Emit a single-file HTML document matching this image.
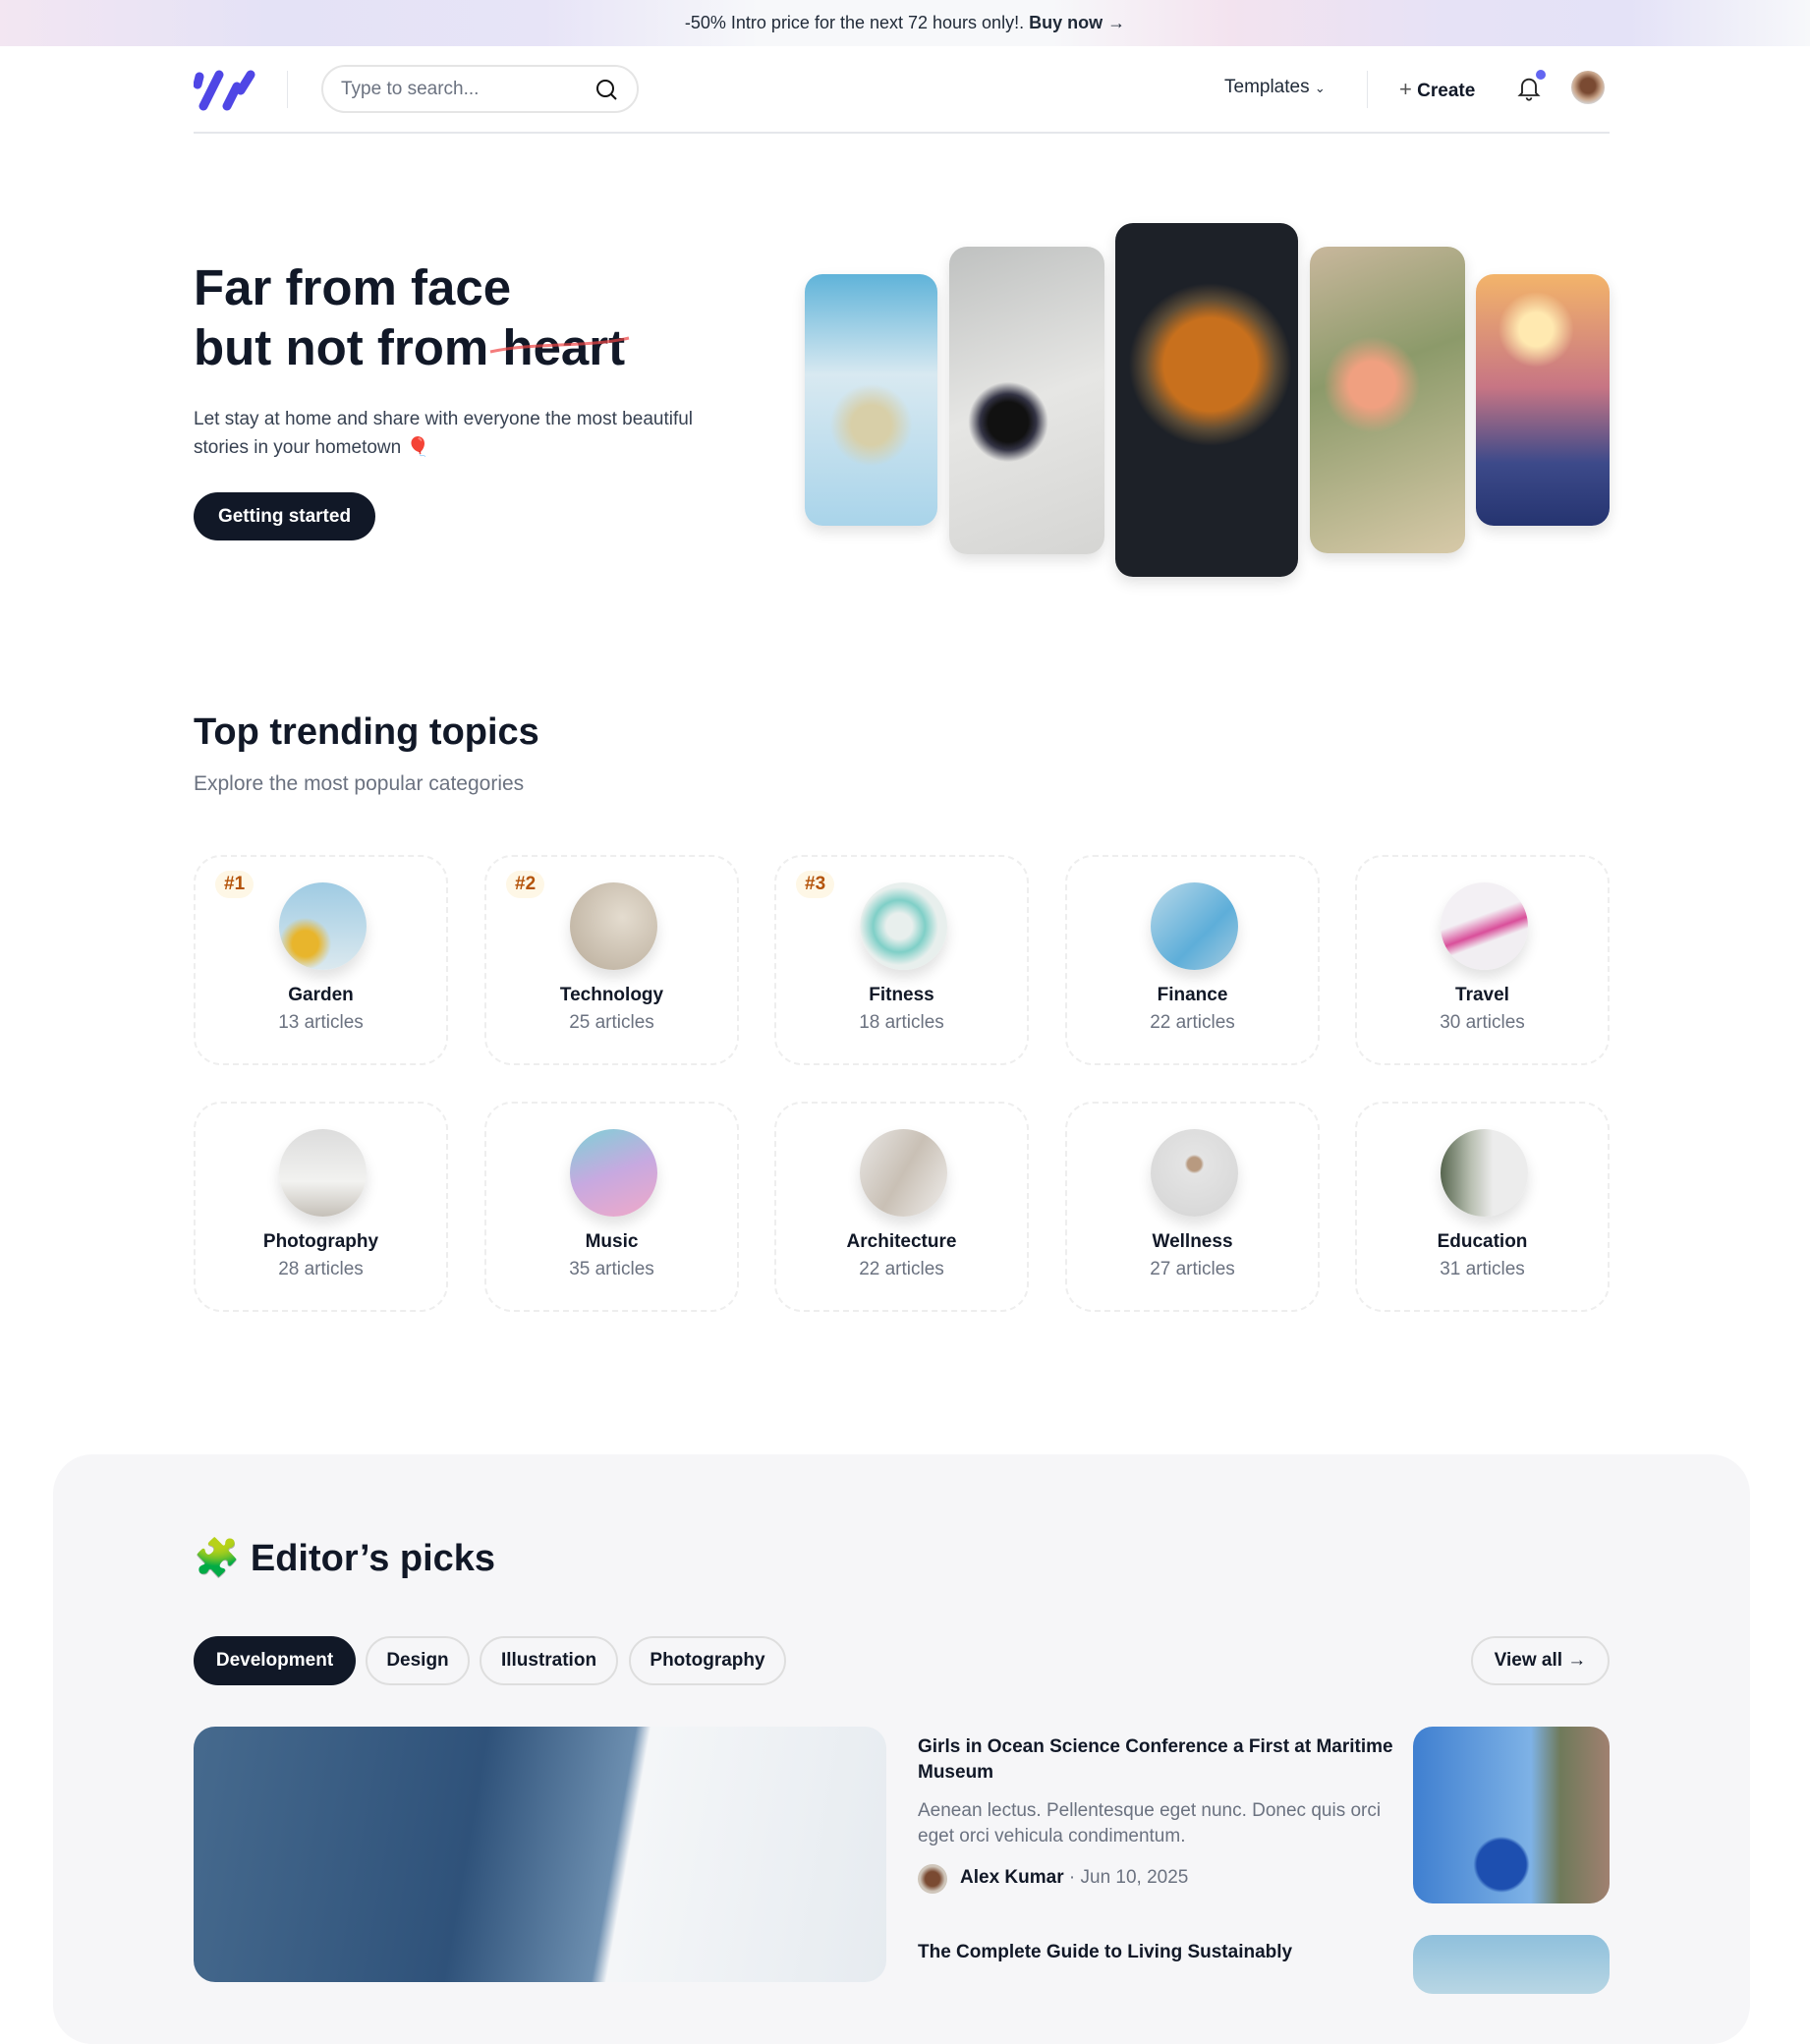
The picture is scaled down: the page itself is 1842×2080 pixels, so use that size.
<!DOCTYPE html>
<html><head><meta charset="utf-8"><style>
*{box-sizing:border-box;margin:0;padding:0}
body{width:1842px;height:1998px;overflow:hidden;background:#fff;font-family:"Liberation Sans",sans-serif;color:#111827;position:relative}
.a{position:absolute}
.banner{left:0;top:0;width:1842px;height:47px;background:linear-gradient(90deg,#f3e6f2 0%,#e4e2f6 15%,#e7e4f7 30%,#f7f8fa 42%,#f7f8fa 58%,#f3e3ef 68%,#e6e2f6 80%,#e4e2f7 90%,#f7f8fa 100%);text-align:center;line-height:47px;font-size:18px;color:#1f2937}
.card{width:259px;height:214px;border:2px dashed #eeeeee;border-radius:28px;text-align:center}
.circ{position:absolute;left:85px;top:26px;width:89px;height:89px;border-radius:50%;box-shadow:0 8px 14px rgba(0,0,0,.12)}
.nm{position:absolute;left:0;right:0;top:130px;font-size:19px;font-weight:bold}
.ct{position:absolute;left:0;right:0;top:158px;font-size:19px;color:#6b7280}
.rk{position:absolute;left:20px;top:14px;height:28px;padding:0 9px;border-radius:14px;background:#fef7e6;color:#b45309;font-weight:bold;font-size:19px;line-height:28px}
.tab{top:1665px;height:50px;border:2px solid #dedede;border-radius:25px;font-size:19px;line-height:46px;text-align:center;font-weight:bold;color:#111827}
.ph{border-radius:18px;box-shadow:0 6px 14px rgba(0,0,0,.12)}
</style></head><body>
<div class="a banner">-50% Intro price for the next 72 hours only!. <b>Buy now</b> →</div>

<svg class="a" style="left:197px;top:70px" width="64" height="44" viewBox="0 0 64 44"><g stroke="#4f46e5" stroke-width="9" stroke-linecap="round"><line x1="6" y1="8" x2="4" y2="16"/><line x1="26" y1="6" x2="10" y2="38"/><line x1="44" y1="18" x2="34" y2="38"/><line x1="58" y1="6" x2="48" y2="22"/></g></svg>
<div class="a" style="left:292px;top:72px;width:1px;height:38px;background:#e5e7eb"></div>
<div class="a" style="left:327px;top:66px;width:323px;height:49px;border:2px solid #e5e5e5;border-radius:25px;font-size:19px;color:#6b7280;line-height:45px;padding-left:18px">Type to search...</div>
<svg class="a" style="left:605px;top:79px" width="24" height="24" viewBox="0 0 24 24" fill="none" stroke="#111" stroke-width="2"><circle cx="11" cy="11" r="8"/><path d="M17 17l5 5"/></svg>
<div class="a" style="left:1246px;top:78px;font-size:19px;color:#1f2937">Templates <span style="font-size:13px">⌄</span></div>
<div class="a" style="left:1391px;top:72px;width:1px;height:38px;background:#e5e7eb"></div>
<div class="a" style="left:1424px;top:78px;font-size:19px;font-weight:bold"><span style="font-weight:normal;color:#555;font-size:22px">+</span> Create</div>
<svg class="a" style="left:1542px;top:76px" width="28" height="28" viewBox="0 0 24 24" fill="none" stroke="#222" stroke-width="1.6"><path d="M6 16V10a6 6 0 0112 0v6l2 2H4z"/><path d="M10 20a2 2 0 004 0"/></svg>
<div class="a" style="left:1563px;top:71px;width:10px;height:10px;border-radius:50%;background:#6366f1"></div>
<div class="a" style="left:1599px;top:72px;width:34px;height:34px;border-radius:50%;background:radial-gradient(circle at 50% 45%,#7a4a32 30%,#c9a58a 55%,#d7d9dc 75%)"></div>
<div class="a" style="left:197px;top:134px;width:1441px;height:2px;background:#e5e7eb"></div>

<div class="a" style="left:197px;top:262px;font-size:51px;font-weight:bold;line-height:61px;color:#111827">Far from face<br>but not from heart</div>
<svg class="a" style="left:495px;top:336px" width="150" height="30"><path d="M4 22 C50 12 100 18 145 8" stroke="#ef4444" stroke-width="3" fill="none" opacity=".7"/></svg>
<div class="a" style="left:197px;top:412px;font-size:19px;line-height:29px;color:#374151">Let stay at home and share with everyone the most beautiful<br>stories in your hometown 🎈</div>
<div class="a" style="left:197px;top:501px;width:185px;height:49px;border-radius:25px;background:#111827;color:#fff;font-weight:bold;font-size:19px;line-height:49px;text-align:center">Getting started</div>

<div class="a ph" style="left:819px;top:279px;width:135px;height:256px;background:radial-gradient(circle at 50% 60%,#d8cfa8 12%,transparent 25%),linear-gradient(180deg,#5fb3d9,#d8e9f1 40%,#a9d4ea)"></div>
<div class="a ph" style="left:966px;top:251px;width:158px;height:313px;background:radial-gradient(circle at 38% 57%,#111 10%,#334 14%,transparent 20%),linear-gradient(160deg,#bfc1c0,#e6e6e4 50%,#d5d5d3)"></div>
<div class="a ph" style="left:1135px;top:227px;width:186px;height:360px;background:radial-gradient(circle at 52% 40%,#c8701d 20%,#5b4b36 28%,#1d2128 35%),linear-gradient(#2a3140,#0b0d10)"></div>
<div class="a ph" style="left:1333px;top:251px;width:158px;height:312px;background:radial-gradient(circle at 40% 45%,#f0a080 12%,transparent 25%),linear-gradient(160deg,#c8b79c,#8c9a6a 40%,#d7c9a8)"></div>
<div class="a ph" style="left:1502px;top:279px;width:136px;height:256px;background:radial-gradient(circle at 45% 22%,#ffe9b0 8%,transparent 18%),linear-gradient(180deg,#f3b46a,#c77584 45%,#3d4a8a 75%,#253470)"></div>

<div class="a" style="left:197px;top:724px;font-size:38px;font-weight:bold">Top trending topics</div>
<div class="a" style="left:197px;top:786px;font-size:21px;color:#6b7280">Explore the most popular categories</div>

<div class="a card" style="left:197px;top:870px"><div class="rk">#1</div><div class="circ" style="background:radial-gradient(circle at 30% 70%,#e8b52c 15%,transparent 30%),linear-gradient(#9fcbe3,#dbe9ef)"></div><div class="nm">Garden</div><div class="ct">13 articles</div></div>
<div class="a card" style="left:493px;top:870px"><div class="rk">#2</div><div class="circ" style="background:radial-gradient(circle at 60% 40%,#e4dccf,#b8ab99)"></div><div class="nm">Technology</div><div class="ct">25 articles</div></div>
<div class="a card" style="left:788px;top:870px"><div class="rk">#3</div><div class="circ" style="background:radial-gradient(circle at 45% 50%,#e8efed 20%,#7fcfc7 40%,#e8efed 60%)"></div><div class="nm">Fitness</div><div class="ct">18 articles</div></div>
<div class="a card" style="left:1084px;top:870px"><div class="circ" style="background:linear-gradient(135deg,#b9d9e9,#5eaed9 60%,#a5cbe0)"></div><div class="nm">Finance</div><div class="ct">22 articles</div></div>
<div class="a card" style="left:1379px;top:870px"><div class="circ" style="background:linear-gradient(160deg,#f3f0f4 40%,#d94f9a 55%,#f1eef2 65%)"></div><div class="nm">Travel</div><div class="ct">30 articles</div></div>

<div class="a card" style="left:197px;top:1121px"><div class="circ" style="background:linear-gradient(#dcdcdc,#f2f2f0 60%,#c5c0b8)"></div><div class="nm">Photography</div><div class="ct">28 articles</div></div>
<div class="a card" style="left:493px;top:1121px"><div class="circ" style="background:linear-gradient(160deg,#7fd0d6,#c7a9e0 50%,#f0a9c8)"></div><div class="nm">Music</div><div class="ct">35 articles</div></div>
<div class="a card" style="left:788px;top:1121px"><div class="circ" style="background:linear-gradient(120deg,#e8e6e4,#c9c0b5 50%,#f0eeec)"></div><div class="nm">Architecture</div><div class="ct">22 articles</div></div>
<div class="a card" style="left:1084px;top:1121px"><div class="circ" style="background:radial-gradient(circle at 50% 40%,#b89a80 10%,#e4e4e4 14%,#d4d4d4)"></div><div class="nm">Wellness</div><div class="ct">27 articles</div></div>
<div class="a card" style="left:1379px;top:1121px"><div class="circ" style="background:linear-gradient(90deg,#56654e,#b9c0b2 35%,#ececec 60%)"></div><div class="nm">Education</div><div class="ct">31 articles</div></div>

<div class="a" style="left:54px;top:1480px;width:1727px;height:600px;background:#f6f6f8;border-radius:40px"></div>
<div class="a" style="left:197px;top:1564px;font-size:38px;font-weight:bold">🧩 Editor’s picks</div>
<div class="a tab" style="left:197px;width:165px;background:#111827;border-color:#111827;color:#fff">Development</div>
<div class="a tab" style="left:372px;width:106px">Design</div>
<div class="a tab" style="left:488px;width:141px">Illustration</div>
<div class="a tab" style="left:640px;width:160px">Photography</div>
<div class="a tab" style="left:1497px;width:141px">View all →</div>

<div class="a" style="left:197px;top:1757px;width:705px;height:260px;border-radius:22px;background:linear-gradient(100deg,#466a8e 0%,#2f527a 40%,#6d8fb0 60%,#f4f6f8 62%,#e6ebf0 100%)"></div>
<div class="a" style="left:934px;top:1765px;width:490px;font-size:19px;font-weight:bold;line-height:26px">Girls in Ocean Science Conference a First at Maritime Museum</div>
<div class="a" style="left:934px;top:1830px;width:490px;font-size:19px;line-height:26px;color:#6b7280">Aenean lectus. Pellentesque eget nunc. Donec quis orci eget orci vehicula condimentum.</div>
<div class="a" style="left:934px;top:1897px;width:30px;height:30px;border-radius:50%;background:radial-gradient(circle,#7a4a32 35%,#cfc6bb 60%)"></div>
<div class="a" style="left:977px;top:1900px;font-size:19px"><b>Alex Kumar</b> <span style="color:#6b7280">· Jun 10, 2025</span></div>
<div class="a" style="left:1438px;top:1757px;width:200px;height:180px;border-radius:20px;background:radial-gradient(circle at 45% 78%,#1d4fb0 14%,transparent 16%),linear-gradient(90deg,#3f7fd0,#7eb2e6 60%,#6f7a5a 75%,#a08070)"></div>
<div class="a" style="left:934px;top:1976px;font-size:19px;font-weight:bold">The Complete Guide to Living Sustainably</div>
<div class="a" style="left:1438px;top:1969px;width:200px;height:60px;border-radius:20px;background:linear-gradient(#8fc0dc,#b8d6e4)"></div>
</body></html>
